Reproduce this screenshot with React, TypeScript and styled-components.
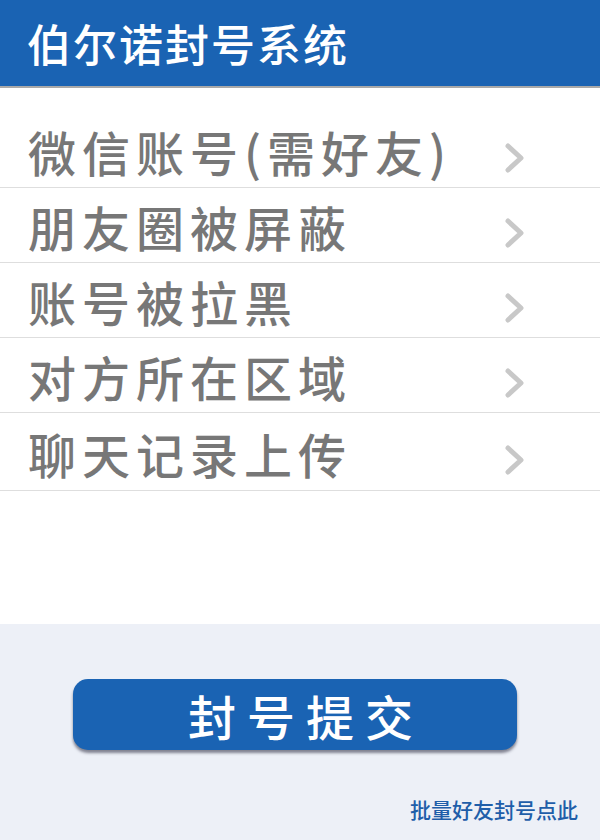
import styled, { createGlobalStyle } from "styled-components";

const GlobalStyle = createGlobalStyle`
  html, body, #root {
    margin: 0;
    padding: 0;
    height: 100%;
  }
  body {
    font-family: "Noto Sans CJK SC", "Noto Sans", sans-serif;
    background: #ffffff;
  }
`;

const Page = styled.div`
  display: flex;
  flex-direction: column;
  width: 600px;
  height: 840px;
  overflow: hidden;
`;

const Header = styled.header`
  height: 86px;
  background-color: #1a63b3;
  border-bottom: 2px solid #a9a9a9;
  display: flex;
  align-items: center;
  padding-left: 27px;
  box-sizing: content-box;
`;

const Title = styled.h1`
  margin: 0;
  color: #ffffff;
  font-size: 44px;
  font-weight: 500;
  letter-spacing: 2px;
  line-height: 1;
`;

const List = styled.ul`
  list-style: none;
  margin: 0;
  padding: 25px 0 0;
  height: 536px;
  box-sizing: border-box;
  background: #ffffff;
`;

const Row = styled.li<{ $tall?: boolean }>`
  height: ${(p) => (p.$tall ? 78 : 75)}px;
  display: flex;
  align-items: center;
  justify-content: space-between;
  padding: 0 74px 0 28px;
  border-bottom: 1px solid #dedede;
  box-sizing: border-box;
  cursor: pointer;
`;

const RowLabel = styled.span`
  color: #777777;
  font-size: 48px;
  font-weight: 500;
  letter-spacing: 6px;
  line-height: 1;
  padding-top: 2px;
`;

const Chevron = styled.svg`
  width: 22px;
  height: 32px;
  margin-top: 16px;
  flex-shrink: 0;
`;

const Footer = styled.div`
  flex: 1;
  background-color: #edf0f7;
  display: flex;
  flex-direction: column;
  padding-top: 55px;
`;

const SubmitButton = styled.button`
  margin-left: 73px;
  width: 444px;
  height: 71px;
  border: none;
  border-radius: 15px;
  background-color: #1a63b3;
  box-shadow: 0 3px 3px rgba(40, 40, 60, 0.55);
  color: #ffffff;
  font-family: "Noto Sans CJK SC", "Noto Sans", sans-serif;
  font-size: 48px;
  font-weight: 500;
  letter-spacing: 11px;
  padding: 0 0 0 22px;
  line-height: 1;
  cursor: pointer;
`;

const BatchLink = styled.a`
  align-self: flex-end;
  margin: 44px 22px 0 0;
  color: #1f5ea9;
  font-size: 21px;
  font-weight: 500;
  text-decoration: none;
  cursor: pointer;
`;

const items = [
  "微信账号(需好友)",
  "朋友圈被屏蔽",
  "账号被拉黑",
  "对方所在区域",
  "聊天记录上传",
];

const Arrow = () => (
  <Chevron viewBox="0 0 22 32">
    <path
      d="M4 4 L17 16 L4 28"
      fill="none"
      stroke="#c8c8c8"
      strokeWidth="5"
      strokeLinecap="round"
      strokeLinejoin="round"
    />
  </Chevron>
);

export default function App() {
  return (
    <>
      <GlobalStyle />
      <Page>
        <Header>
          <Title>伯尔诺封号系统</Title>
        </Header>
        <List>
          {items.map((item, i) => (
            <Row key={item} $tall={i === items.length - 1}>
              <RowLabel>{item}</RowLabel>
              <Arrow />
            </Row>
          ))}
        </List>
        <Footer>
          <SubmitButton>封号提交</SubmitButton>
          <BatchLink>批量好友封号点此</BatchLink>
        </Footer>
      </Page>
    </>
  );
}
